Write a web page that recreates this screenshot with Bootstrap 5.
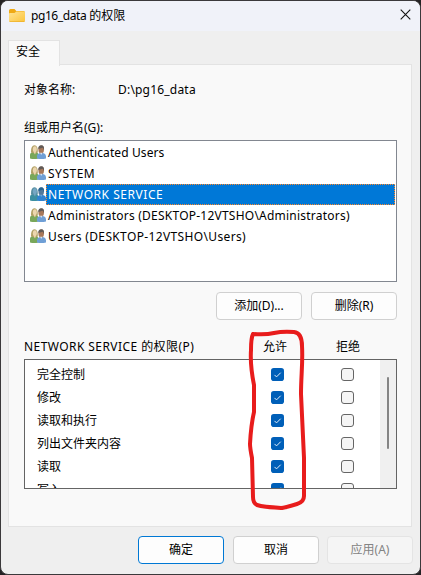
<!DOCTYPE html>
<html lang="zh-CN">
<head>
<meta charset="utf-8">
<meta name="viewport" content="width=device-width, initial-scale=1">
<title>pg16_data 的权限</title>
<link href="https://cdn.jsdelivr.net/npm/bootstrap@5.3.0/dist/css/bootstrap.min.css" rel="stylesheet">
<style>
body{margin:0;background:#242224;font:12px/16px "Noto Sans","Noto Sans CJK SC",sans-serif;color:#000;overflow:hidden}
.dialog{width:421px;height:575px;border:1px solid #3b393b;border-radius:8px;background:#efefef}
.titlebar{height:30px;background:#f0f2f9;padding:0 9px 0 8px}
.titlebar .caption{margin-left:6px;line-height:28px}
.caption-latin{letter-spacing:-.42px}
.tabs{height:34px;padding:9px 0 0 7px}
.tab-label{width:52px;height:26px;background:#f9f9f9;border:1px solid #e3e3e3;border-bottom:0;padding:3px 0 0 7px;z-index:1}
.panel{margin:-1px 8px 0 7px;height:463px;background:#f9f9f9;border:1px solid #e3e3e3;padding:0 14px 0 15px}
.object-row{padding-top:17px}
.object-row .key{width:94px}
.path-text{letter-spacing:.2px}
.group-label{margin-top:22px}
.userlist{margin-top:4px;height:142px;background:#fff;border:1px solid #828790;padding:1px 1px 0 4px}
.user{height:21px}
.user .name{height:21px;line-height:19px;padding-left:1px;border:1px solid transparent}
.user .name span{display:block}
.user.selected .name{flex:1;background:#0078d7;color:#fff;border:1px dotted #ff8728}
.n1{letter-spacing:.1px}.n2{letter-spacing:.5px}.n3{letter-spacing:.54px}.n4{letter-spacing:.23px}.n5{letter-spacing:.36px}
.wbtns{gap:9px;margin-top:10px}
.wbtn{width:86px;height:28px;padding:0;border:1px solid #d0d0d0;border-radius:4px;background:#fdfdfd;font-size:12px;line-height:26px;color:#000}
.wbtn.primary{border-color:#0078d4}
.wbtn.off{background:#f5f5f5;border-color:#e4e4e4;color:#838383;margin-left:-1px}
.perm-head{margin-top:19px;height:16px}
.perm-title{letter-spacing:.43px}
.perm-head .allow-head{width:73px}
.perm-head .deny-head{width:61px}
.permbox{margin-top:4px;height:130px;background:#fff;border:1px solid #646464}
.perm{height:23px;padding-left:12px}
.perms{padding-top:8px}
.perm .what{width:234px;line-height:16px;margin-top:-1px}
.perm .deny{margin-left:57px}
.scroll{width:16px;background:#f0f0f0;padding:17px 0 0 7px}
.thumb{width:2px;height:72px;background:#858585;border-radius:1px}
.footer-row{padding:9px 7px 0 0;gap:9px}
.marker{left:0;top:0;pointer-events:none}
</style>
</head>
<body>
<svg width="0" height="0" class="position-absolute">
<defs>
<linearGradient id="fg" x1="0" y1="0" x2="1" y2="1"><stop stop-color="#ffe394"/><stop offset="1" stop-color="#fbc43c"/></linearGradient>
<symbol id="people" viewBox="0 0 16 15" preserveAspectRatio="none">
<path d="M0 14V10.500Q0 8 3 7.500H6Q8.500 8 8.500 11V14Q4 15 0 14Z" fill="var(--a,#79a75a)"/>
<path d="M1 8Q.7 1 4.500.8Q8.200 1 7.800 8L5 9Z" fill="var(--b,#b09f63)"/>
<ellipse cx="4.800" cy="4.800" rx="2" ry="3" fill="var(--c,#ecd6ae)"/>
<path d="M3.600 7.500h2.200L5 10Z" fill="var(--c,#ecd6ae)"/>
<path d="M7 14V11Q7.200 9 10 8.500H13Q15.800 9 16 11.500V14Q11 15 7 14Z" fill="var(--d,#6f9fd6)"/>
<ellipse cx="11.200" cy="5" rx="2.800" ry="4" fill="var(--e,#a8785a)"/>
<path d="M8.300 4.500Q8 1 11.500.8Q14.500 1 14 5.500L12.800 3.200Z" fill="var(--f,#605a57)"/>
<path d="M10 8.300h2.500L11.200 10.500Z" fill="var(--g,#dbe6f2)"/>
</symbol>
<symbol id="on" viewBox="0 0 13 13"><rect width="13" height="13" rx="2.800" fill="#005fb8"/><path d="M3.500 6.900 5.500 8.900 9.700 4.700" fill="none" stroke="#e4effa" stroke-width="1"/></symbol>
<symbol id="off" viewBox="0 0 13 13"><rect x=".5" y=".5" width="12" height="12" rx="2.500" fill="#f5f5f5" stroke="#656565"/></symbol>
</defs>
</svg>
<main class="dialog position-relative overflow-hidden">
<header class="titlebar d-flex align-items-center">
<svg width="16" height="14" viewBox="0 0 16 14"><path d="M0 1.500Q0 0 1.500 0H5.500L7.300 2H14.500Q16 2 16 3.500V7H0Z" fill="#efa914"/><path d="M0 4.800Q0 4 1 4H5.500L7.300 2.500H15Q16 2.500 16 3.500V11.500Q16 13 14.500 13H1.500Q0 13 0 11.500Z" fill="url(#fg)"/><path d="M.5 12.500H15.500" stroke="#e9a922" stroke-width=".6"/></svg>
<span class="caption"><span class="caption-latin">pg16_data</span> 的权限</span>
<svg class="ms-auto mb-1" width="11" height="11" viewBox="0 0 11 11"><path d="M.7.7 10.300 10.300M10.300.7.7 10.300" stroke="#111" stroke-width="1.100"/></svg>
</header>
<div class="tabs"><div class="tab-label position-relative">安全</div></div>
<section class="panel">
<div class="object-row d-flex"><span class="key">对象名称:</span><span class="path-text">D:\pg16_data</span></div>
<div class="group-label">组或用户名(G):</div>
<div class="userlist">
<div class="user d-flex"><svg width="17" height="18"><use href="#people" x="1" y="2.500" width="16" height="15"/></svg><div class="name"><span class="n1">Authenticated Users</span></div></div>
<div class="user d-flex"><svg width="17" height="18"><use href="#people" x="1" y="2.500" width="16" height="15"/></svg><div class="name"><span class="n2">SYSTEM</span></div></div>
<div class="user d-flex selected"><svg width="17" height="18" style="--a:#3c8fa0;--b:#568da0;--c:#75a7c4;--d:#3083d0;--e:#52799a;--f:#27638f;--g:#6da8dc"><use href="#people" x="1" y="2.500" width="16" height="15"/></svg><div class="name"><span class="n3">NETWORK SERVICE</span></div></div>
<div class="user d-flex"><svg width="17" height="18"><use href="#people" x="1" y="2.500" width="16" height="15"/></svg><div class="name"><span class="n4">Administrators (DESKTOP-12VTSHO\Administrators)</span></div></div>
<div class="user d-flex"><svg width="17" height="18"><use href="#people" x="1" y="2.500" width="16" height="15"/></svg><div class="name"><span class="n5">Users (DESKTOP-12VTSHO\Users)</span></div></div>
</div>
<div class="wbtns d-flex justify-content-end"><button class="wbtn">添加(D)...</button><button class="wbtn">删除(R)</button></div>
<div class="perm-head d-flex"><span class="flex-grow-1 perm-title">NETWORK SERVICE 的权限(P)</span><span class="allow-head">允许</span><span class="deny-head">拒绝</span></div>
<div class="permbox d-flex overflow-hidden">
<div class="perms flex-grow-1">
<div class="perm d-flex"><span class="what">完全控制</span><svg width="13" height="13"><use href="#on"/></svg><svg class="deny" width="13" height="13"><use href="#off"/></svg></div>
<div class="perm d-flex"><span class="what">修改</span><svg width="13" height="13"><use href="#on"/></svg><svg class="deny" width="13" height="13"><use href="#off"/></svg></div>
<div class="perm d-flex"><span class="what">读取和执行</span><svg width="13" height="13"><use href="#on"/></svg><svg class="deny" width="13" height="13"><use href="#off"/></svg></div>
<div class="perm d-flex"><span class="what">列出文件夹内容</span><svg width="13" height="13"><use href="#on"/></svg><svg class="deny" width="13" height="13"><use href="#off"/></svg></div>
<div class="perm d-flex"><span class="what">读取</span><svg width="13" height="13"><use href="#on"/></svg><svg class="deny" width="13" height="13"><use href="#off"/></svg></div>
<div class="perm d-flex"><span class="what">写入</span><svg width="13" height="13"><use href="#on"/></svg><svg class="deny" width="13" height="13"><use href="#off"/></svg></div>
</div>
<div class="scroll"><div class="thumb"></div></div>
</div>
</section>
<div class="footer-row d-flex justify-content-end"><button class="wbtn primary">确定</button><button class="wbtn">取消</button><button class="wbtn off" disabled>应用(A)</button></div>
</main>
<svg class="marker position-absolute" width="421" height="575"><path d="M253 334Q266 335 274 333Q283 331 294 332Q302 333 302 346C303 362 301 376 301 394C302 416 303 436 304 458V496Q304 502 297 504Q284 508 281 508Q263 507 257 505Q253 503 253 497L252 458Q250 448 250 444Q251 425 254 412V385Q250 365 251 350Q251 338 253 334" fill="none" stroke="#e81c1c" stroke-width="4" stroke-linejoin="round" stroke-linecap="round"/></svg>
<script src="https://cdn.jsdelivr.net/npm/bootstrap@5.3.0/dist/js/bootstrap.bundle.min.js"></script>
</body>
</html>
